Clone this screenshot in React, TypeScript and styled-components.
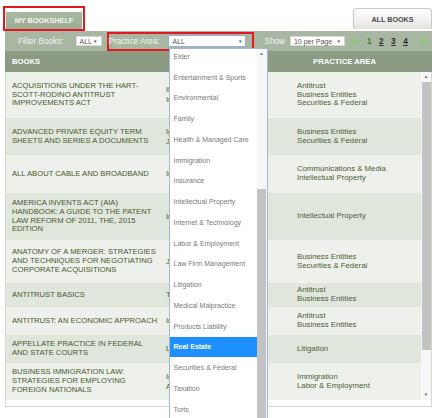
import React from 'react';
import styled, { createGlobalStyle } from 'styled-components';

const GlobalStyle = createGlobalStyle`
  html, body {
    margin: 0;
    padding: 0;
    background: #fff;
    overflow: hidden;
  }
  body {
    font-family: "Liberation Sans", Arial, sans-serif;
  }
`;

interface Book {
    title: string[];
    authors: string[];
    areas: string[];
    h: number;
}

const books: Book[] = [
    {
        title: ['ACQUISITIONS UNDER THE HART-', 'SCOTT-RODINO ANTITRUST', 'IMPROVEMENTS ACT'],
        authors: ['Ilene Knable Gotts', 'Ira S. Sacks'],
        areas: ['Antitrust', 'Business Entities', 'Securities & Federal'],
        h: 46,
    },
    {
        title: ['ADVANCED PRIVATE EQUITY TERM', 'SHEETS AND SERIES A DOCUMENTS'],
        authors: ['Igor Kirman', 'Jonathan Lee'],
        areas: ['Business Entities', 'Securities & Federal'],
        h: 37,
    },
    {
        title: ['ALL ABOUT CABLE AND BROADBAND'],
        authors: ['Ira Ferris'],
        areas: ['Communications & Media', 'Intellectual Property'],
        h: 38,
    },
    {
        title: ['AMERICA INVENTS ACT (AIA)', 'HANDBOOK: A GUIDE TO THE PATENT', 'LAW REFORM OF 2011, THE, 2015', 'EDITION'],
        authors: ['Irah H. Donner'],
        areas: ['Intellectual Property'],
        h: 47,
    },
    {
        title: ['ANATOMY OF A MERGER: STRATEGIES', 'AND TECHNIQUES FOR NEGOTIATING', 'CORPORATE ACQUISITIONS'],
        authors: ['James C. Freund'],
        areas: ['Business Entities', 'Securities & Federal'],
        h: 43,
    },
    {
        title: ['ANTITRUST BASICS'],
        authors: ['Terry Calvani'],
        areas: ['Antitrust', 'Business Entities'],
        h: 24,
    },
    {
        title: ['ANTITRUST: AN ECONOMIC APPROACH'],
        authors: ['Irving Scher'],
        areas: ['Antitrust', 'Business Entities'],
        h: 28,
    },
    {
        title: ['APPELLATE PRACTICE IN FEDERAL', 'AND STATE COURTS'],
        authors: ['Laurie Webb'],
        areas: ['Litigation'],
        h: 28,
    },
    {
        title: ['BUSINESS IMMIGRATION LAW:', 'STRATEGIES FOR EMPLOYING', 'FOREIGN NATIONALS'],
        authors: ['Ignatius Li', 'Austin Fragomen'],
        areas: ['Immigration', 'Labor & Employment'],
        h: 37,
    },
];

const practiceAreas = [
    'Elder', 'Entertainment & Sports', 'Environmental', 'Family', 'Health & Managed Care',
    'Immigration', 'Insurance', 'Intellectual Property', 'Internet & Technology',
    'Labor & Employment', 'Law Firm Management', 'Litigation', 'Medical Malpractice',
    'Products Liability', 'Real Estate', 'Securities & Federal', 'Taxation', 'Torts',
];

const Arrow: React.FC<{ dir: 'left' | 'right' }> = ({ dir }) => (
    <svg width="10" height="9" viewBox="0 0 10 9" style={{ transform: dir === 'right' ? 'scaleX(-1)' : undefined }}>
        <polygon points="0,4.5 4.6,0 4.6,2.6 10,2.6 10,6.4 4.6,6.4 4.6,9" fill="#93c483" />
    </svg>
);

export default function App() {
    return (
        <Page>
            <GlobalStyle />
            <TabRow>
                <RedBox>
                    <ShelfTab>MY BOOKSHELF</ShelfTab>
                </RedBox>
                <AllBooksTab>ALL BOOKS</AllBooksTab>
            </TabRow>
            <Panel>
                <FilterBar>
                    <BarLabel>Filter Books:</BarLabel>
                    <Select w={26} style={{ marginLeft: 12 }}>
                        <span>ALL</span>
                        <Caret>▼</Caret>
                    </Select>
                    <PracticeBox>
                        <BarLabel>Practice Area:</BarLabel>
                        <Select w={78} focused>
                            <span>ALL</span>
                            <Caret>▼</Caret>
                        </Select>
                        <Dropdown>
                            <OptionList>
                                <Options>
                                    {practiceAreas.map((a) => (
                                        <Option key={a} active={a === 'Real Estate'}>{a}</Option>
                                    ))}
                                </Options>
                            </OptionList>
                            <Track>
                                <TrackArrow>▲</TrackArrow>
                                <Thumb size={300} offset={130} />
                            </Track>
                        </Dropdown>
                    </PracticeBox>
                    <BarLabel style={{ marginLeft: 10 }}>Show</BarLabel>
                    <Select w={55} style={{ marginLeft: 5 }}>
                        <span>10 per Page</span>
                        <Caret>▼</Caret>
                    </Select>
                    <Pager>
                        <Arrow dir="left" />
                        <PageNum current>1</PageNum>
                        <PageNum>2</PageNum>
                        <PageNum>3</PageNum>
                        <PageNum>4</PageNum>
                        <NextArrow><Arrow dir="right" /></NextArrow>
                    </Pager>
                </FilterBar>
                <HeaderRow>
                    <HeadCell>BOOKS</HeadCell>
                    <HeadCell />
                    <HeadCell center>PRACTICE AREA</HeadCell>
                    <HeadCell />
                </HeaderRow>
                <BodyFrame>
                    <Rows>
                        {books.map((b, i) => (
                            <Row key={i} alt={i % 2 === 1} style={{ height: b.h }}>
                                <TitleCell>
                                    {b.title.map((l) => <Line key={l}>{l}</Line>)}
                                </TitleCell>
                                <AuthorCell>
                                    {b.authors.map((l) => <Line key={l}>{l}</Line>)}
                                </AuthorCell>
                                <AreaCell>
                                    {b.areas.map((l) => <Line key={l}>{l}</Line>)}
                                </AreaCell>
                            </Row>
                        ))}
                    </Rows>
                    <Track>
                        <TrackArrow>▲</TrackArrow>
                        <Thumb size={268} offset={0} />
                        <TrackArrow style={{ marginTop: 'auto' }}>▼</TrackArrow>
                    </Track>
                </BodyFrame>
            </Panel>
        </Page>
    );
}

const Page = styled.div`
  width: 440px;
  height: 418px;
  overflow: hidden;
`;

const TabRow = styled.div`
  display: flex;
  justify-content: space-between;
  align-items: flex-end;
  padding: 6px 8px 0 3px;
`;

const RedBox = styled.div`
  border: 2px solid #e5161d;
  padding: 4px 1px 0 1px;
`;

const ShelfTab = styled.div`
  width: 76px;
  height: 17px;
  display: flex;
  align-items: center;
  justify-content: center;
  background: linear-gradient(#a9b8a1, #9eae96);
  color: #f3f5f1;
  font-size: 7.3px;
  font-weight: bold;
`;

const AllBooksTab = styled.div`
  width: 79px;
  height: 21px;
  box-sizing: border-box;
  margin-bottom: 2px;
  display: flex;
  align-items: center;
  justify-content: center;
  background: linear-gradient(#ffffff, #e4e4e4);
  border: 1px solid #c9c9c9;
  border-bottom: none;
  border-radius: 4px 4px 0 0;
  color: #4a4a4a;
  font-size: 7.2px;
  font-weight: bold;
`;

const Panel = styled.div`
  margin: 0 8px 0 5px;
`;

const FilterBar = styled.div`
  height: 20px;
  display: flex;
  align-items: center;
  padding-left: 13px;
  background: #a8b7a1;
`;

const BarLabel = styled.span`
  color: #f4f6f2;
  font-size: 8.2px;
  white-space: nowrap;
`;

const Select = styled.div<{ w: number; focused?: boolean }>`
  width: ${(p) => p.w}px;
  height: ${(p) => (p.focused ? 12 : 10)}px;
  box-sizing: border-box;
  display: flex;
  align-items: center;
  justify-content: space-between;
  padding: 0 3px 0 3px;
  background: #fff;
  border: 1px solid ${(p) => (p.focused ? '#8eaedc' : '#d6d6d6')};
  color: #555;
  font-size: 7px;
  white-space: nowrap;
`;

const Caret = styled.span`
  font-size: 4.5px;
  color: #555;
`;

const PracticeBox = styled.div`
  position: relative;
  height: 19px;
  box-sizing: border-box;
  margin-left: 5px;
  display: flex;
  align-items: center;
  gap: 9px;
  padding: 0 6px 0 0;
  border: 2px solid #e5161d;
`;

const Dropdown = styled.div`
  position: absolute;
  left: 60px;
  top: 14px;
  width: 99px;
  height: 384px;
  box-sizing: border-box;
  display: flex;
  background: #fff;
  border: 1px solid #a3b7d8;
  z-index: 10;
`;

const OptionList = styled.div`
  flex: 1;
  overflow: hidden;
`;

const Options = styled.div`
  margin-top: -2.4px;
`;

const Option = styled.div<{ active?: boolean }>`
  height: 20.75px;
  display: flex;
  align-items: center;
  padding-left: 4px;
  font-size: 7px;
  white-space: nowrap;
  color: ${(p) => (p.active ? '#fff' : '#7a7a7a')};
  font-weight: ${(p) => (p.active ? 'bold' : 'normal')};
  background: ${(p) => (p.active ? '#1e8ffe' : 'transparent')};
`;

const Track = styled.div`
  width: 10px;
  flex: none;
  display: flex;
  flex-direction: column;
  align-items: center;
  background: #f7f7f7;
`;

const TrackArrow = styled.div`
  height: 10px;
  flex: none;
  font-size: 4.5px;
  line-height: 10px;
  color: #6a6a6a;
`;

const Thumb = styled.div<{ size: number; offset: number }>`
  width: 9px;
  flex: none;
  height: ${(p) => p.size}px;
  margin-top: ${(p) => p.offset}px;
  background: #c3c3c3;
`;

const Pager = styled.div`
  display: flex;
  align-items: center;
  margin-left: 4px;
`;

const PageNum = styled.span<{ current?: boolean }>`
  margin-left: ${(p) => (p.current ? 8 : 7.5)}px;
  font-size: 8.2px;
  font-weight: bold;
  color: ${(p) => (p.current ? '#3c7d22' : '#2d2d2d')};
  text-decoration: ${(p) => (p.current ? 'none' : 'underline')};
`;

const NextArrow = styled.span`
  display: flex;
  margin-left: 11px;
`;

const HeaderRow = styled.div`
  height: 21px;
  display: grid;
  grid-template-columns: 157px 105px 155px 10px;
  align-items: center;
  background: #8b9b84;
`;

const HeadCell = styled.div<{ center?: boolean }>`
  padding-left: ${(p) => (p.center ? 0 : 7)}px;
  text-align: ${(p) => (p.center ? 'center' : 'left')};
  color: #fff;
  font-size: 7.7px;
  font-weight: bold;
`;

const BodyFrame = styled.div`
  display: flex;
  height: 328px;
  border: 1px solid #d2dacf;
  border-top: none;
  padding-bottom: 6px;
  background: #fff;
`;

const Rows = styled.div`
  flex: 1;
  overflow: hidden;
`;

const Row = styled.div<{ alt?: boolean }>`
  display: grid;
  grid-template-columns: 156px 105px 1fr;
  align-items: center;
  background: ${(p) => (p.alt ? '#e1e6dd' : '#eef1eb')};
  overflow: hidden;
`;

const TitleCell = styled.div`
  padding-left: 6px;
  color: #46592b;
  font-size: 7.65px;
  line-height: 8.7px;
`;

const AuthorCell = styled.div`
  padding-left: 4px;
  color: #46592b;
  font-size: 7.65px;
  line-height: 10px;
`;

const AreaCell = styled.div`
  padding-left: 30px;
  color: #4d6033;
  font-size: 7.8px;
  line-height: 8.7px;
`;

const Line = styled.div`
  white-space: nowrap;
`;
